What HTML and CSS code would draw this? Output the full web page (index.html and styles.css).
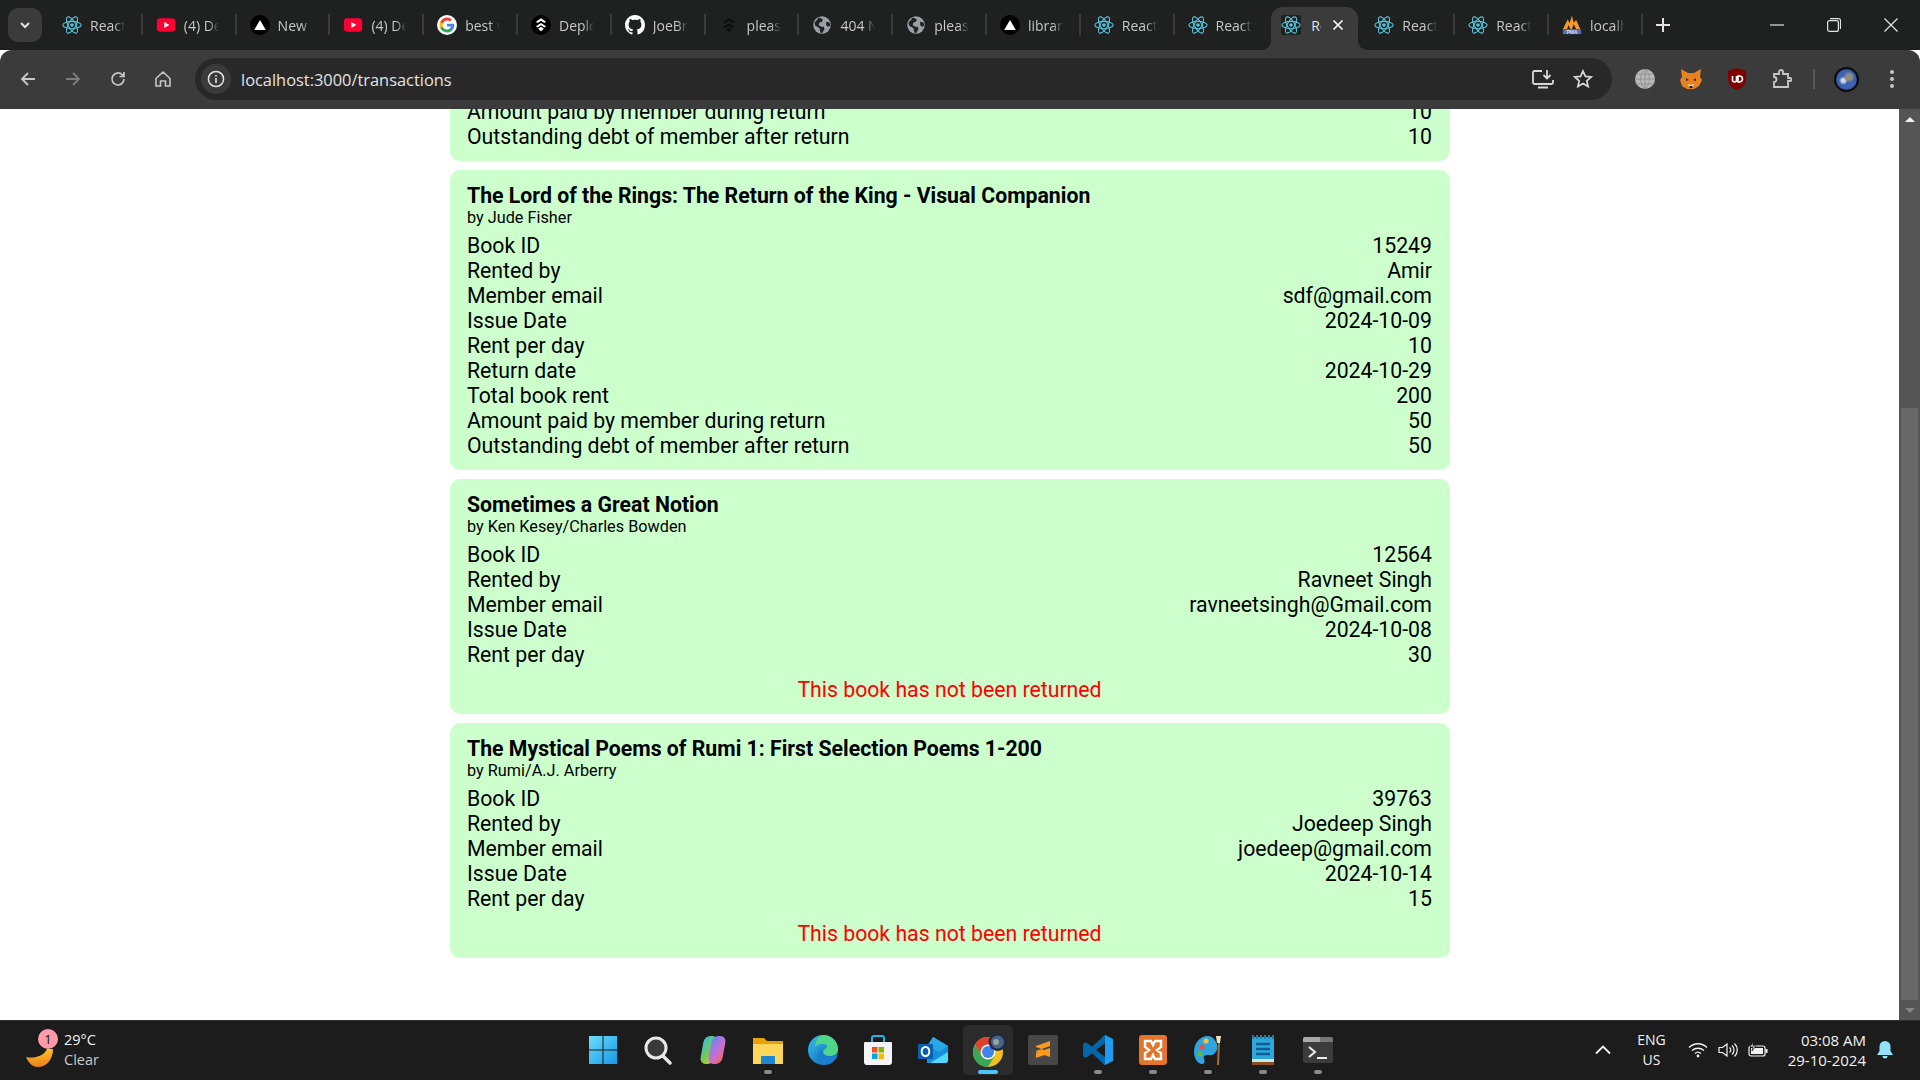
FILE: index.html
```html
<!DOCTYPE html>
<html lang="en">
<head>
    <meta charset="UTF-8">
    <title>Transactions</title>
    <link rel="stylesheet" href="styles.css">
</head>
<body>
    <svg class="defs" aria-hidden="true">
        <symbol id="react" viewBox="0 0 24 24">
            <g fill="none" stroke="#58c4dc" stroke-width="1.3">
                <ellipse cx="12" cy="12" rx="11" ry="4.4"/>
                <ellipse cx="12" cy="12" rx="11" ry="4.4" transform="rotate(60 12 12)"/>
                <ellipse cx="12" cy="12" rx="11" ry="4.4" transform="rotate(120 12 12)"/>
            </g>
            <circle cx="12" cy="12" r="2.2" fill="#58c4dc"/>
        </symbol>
        <symbol id="youtube" viewBox="0 0 24 24">
            <rect x="1" y="4" width="22" height="16" rx="4" fill="#ff0033"/>
            <path d="M10 8.5v7l6-3.5z" fill="#fff"/>
        </symbol>
        <symbol id="vercel" viewBox="0 0 24 24">
            <circle cx="12" cy="12" r="12" fill="#000"/>
            <path d="M12 6l7 12H5z" fill="#fff"/>
        </symbol>
        <symbol id="globe" viewBox="0 0 24 24">
            <circle cx="12" cy="12" r="10.5" fill="#9aa0a6"/>
            <path d="M8 3l5 2-1 3-3 1-1 3 3 2 3 0 1 3-3 5-2-1-1-5-5-3-1-4 3-3zM17 8l4 1 1 4-3 1-2-2z" fill="#202124"/>
        </symbol>
        <symbol id="google" viewBox="0 0 24 24">
            <circle cx="12" cy="12" r="12" fill="#fff"/>
            <path d="M20.6 12.2c0-.6-.1-1.200-.2-1.800H12v3.400h4.800c-.2 1.100-.8 2-1.800 2.700v2.200h2.900c1.700-1.600 2.700-3.800 2.700-6.500z" fill="#4285f4"/>
            <path d="M12 21c2.400 0 4.400-.8 5.900-2.200L15 16.500c-.8.500-1.800.9-3 .9-2.300 0-4.300-1.600-5-3.700H4v2.300C5.500 19 8.500 21 12 21z" fill="#34a853"/>
            <path d="M7 13.700c-.4-1.100-.4-2.300 0-3.400V8H4c-1.300 2.500-1.300 5.500 0 8z" fill="#fbbc05"/>
            <path d="M12 6.600c1.300 0 2.500.5 3.400 1.300L18 5.400C16.400 3.900 14.300 3 12 3 8.500 3 5.500 5 4 8l3 2.300c.7-2.100 2.700-3.700 5-3.700z" fill="#ea4335"/>
        </symbol>
        <symbol id="deploy" viewBox="0 0 24 24">
            <circle cx="12" cy="12" r="12" fill="#000"/>
            <path d="M12 4l6 4-2 1.500-4-2.700-4 2.700L6 8zM12 9.500l6 4-2 1.500-4-2.700-4 2.700-2-1.500zM8.500 16.500l3.500-2.300 3.500 2.300L12 19.500z" fill="#fff"/>
        </symbol>
        <symbol id="deploy-dark" viewBox="0 0 24 24">
            <path d="M12 4l7 4.500-2 1.500-5-3-5 3-2-1.500zM12 10l7 4.500-2 1.500-5-3-5 3-2-1.500zM8 17.500l4-2.500 4 2.500-4 3z" fill="#0f0f0f"/>
        </symbol>
        <symbol id="github" viewBox="0 0 16 16">
            <path fill="#fff" d="M8 0C3.580 0 0 3.580 0 8c0 3.540 2.290 6.530 5.470 7.590.4.070.55-.17.55-.38 0-.19-.01-.82-.01-1.490-2.010.37-2.530-.49-2.690-.94-.09-.23-.48-.94-.82-1.130-.28-.15-.68-.52-.01-.53.630-.01 1.080.58 1.230.82.720 1.210 1.870.87 2.330.66.070-.52.280-.87.510-1.070-1.780-.2-3.640-.89-3.640-3.950 0-.87.310-1.590.820-2.150-.08-.2-.36-1.020.08-2.120 0 0 .67-.21 2.200.82.640-.18 1.320-.27 2-.27s1.360.09 2 .27c1.530-1.040 2.200-.82 2.200-.82.440 1.100.160 1.920.080 2.120.51.560.82 1.270.82 2.150 0 3.070-1.870 3.750-3.650 3.950.29.250.54.730.54 1.480 0 1.070-.01 1.930-.01 2.200 0 .21.150.46.550.38A8.010 8.010 0 0 0 16 8c0-4.420-3.580-8-8-8z"/>
        </symbol>
        <symbol id="pma" viewBox="0 0 24 24">
            <path d="M1 17L7 5l2 5 3-9 2 8 3-3 5 11z" fill="#f39a2b"/>
            <path d="M6 17l2-5 2 5zM12 17l2-6 3 6z" fill="#1e2023"/>
            <rect x="1" y="17" width="22" height="6" fill="#5a6aa6"/>
            <text x="12" y="22.500" class="pma-text">PMA</text>
        </symbol>
    </svg>

    <header class="tab-strip">
        <button class="tab-search" type="button">
            <svg viewBox="0 0 12 12" width="12" height="12"><path d="M2 4l4 4 4-4" fill="none" stroke="#e3e3e3" stroke-width="2"/></svg>
        </button>
        <div class="tabs">
            <div class="tab"><svg class="favicon"><use href="#react"/></svg><span class="tab-title">React App</span></div>
            <div class="tab"><svg class="favicon"><use href="#youtube"/></svg><span class="tab-title">(4) Deploy</span></div>
            <div class="tab"><svg class="favicon"><use href="#vercel"/></svg><span class="tab-title">New Project</span></div>
            <div class="tab"><svg class="favicon"><use href="#youtube"/></svg><span class="tab-title">(4) Deploy</span></div>
            <div class="tab"><svg class="favicon"><use href="#google"/></svg><span class="tab-title">best way</span></div>
            <div class="tab"><svg class="favicon"><use href="#deploy"/></svg><span class="tab-title">Deploy</span></div>
            <div class="tab"><svg class="favicon"><use href="#github"/></svg><span class="tab-title">JoeBrar</span></div>
            <div class="tab"><svg class="favicon"><use href="#deploy-dark"/></svg><span class="tab-title">please</span></div>
            <div class="tab"><svg class="favicon"><use href="#globe"/></svg><span class="tab-title">404 Not</span></div>
            <div class="tab"><svg class="favicon"><use href="#globe"/></svg><span class="tab-title">please</span></div>
            <div class="tab"><svg class="favicon"><use href="#vercel"/></svg><span class="tab-title">library</span></div>
            <div class="tab"><svg class="favicon"><use href="#react"/></svg><span class="tab-title">React App</span></div>
            <div class="tab tab-last-before"><svg class="favicon"><use href="#react"/></svg><span class="tab-title">React App</span></div>
            <div class="tab tab-active">
                <span class="favicon-box"><svg class="favicon"><use href="#react"/></svg></span>
                <span class="tab-title tab-title-short">React</span>
                <svg class="tab-close" viewBox="0 0 12 12" width="12" height="12"><path d="M1.500 1.500l9 9M10.500 1.500l-9 9" stroke="#fff" stroke-width="1.600"/></svg>
            </div>
            <div class="tab"><svg class="favicon"><use href="#react"/></svg><span class="tab-title">React App</span></div>
            <div class="tab"><svg class="favicon"><use href="#react"/></svg><span class="tab-title">React App</span></div>
            <div class="tab"><svg class="favicon"><use href="#pma"/></svg><span class="tab-title">localhost</span></div>
        </div>
        <svg class="new-tab" viewBox="0 0 14 14" width="14" height="14"><path d="M7 0v14M0 7h14" stroke="#e3e3e3" stroke-width="2"/></svg>
        <div class="window-controls">
            <svg viewBox="0 0 14 14" width="14" height="14"><path d="M0 7h14" stroke="#e3e3e3" stroke-width="1.200"/></svg>
            <svg viewBox="0 0 14 14" width="14" height="14"><rect x=".6" y="2.600" width="10.800" height="10.800" rx="2" fill="none" stroke="#e3e3e3" stroke-width="1.200"/><path d="M3 .6h8.500a2 2 0 0 1 2 2V11" fill="none" stroke="#e3e3e3" stroke-width="1.200"/></svg>
            <svg viewBox="0 0 14 14" width="14" height="14"><path d="M.5.500l13 13M13.500.5l-13 13" stroke="#e3e3e3" stroke-width="1.200"/></svg>
        </div>
    </header>

    <nav class="toolbar">
        <div class="nav-buttons">
            <svg viewBox="0 0 18 18" width="18" height="18"><path d="M16 9H3M9 3L3 9l6 6" fill="none" stroke="#c7c7c7" stroke-width="1.800"/></svg>
            <svg viewBox="0 0 18 18" width="18" height="18"><path d="M2 9h13M9 3l6 6-6 6" fill="none" stroke="#7d7d7d" stroke-width="1.800"/></svg>
            <svg viewBox="0 0 18 18" width="18" height="18"><path d="M15 9a6 6 0 1 1-1.800-4.300L15 6.500M15 2v4.500h-4.500" fill="none" stroke="#c7c7c7" stroke-width="1.700"/></svg>
            <svg viewBox="0 0 18 18" width="18" height="18"><path d="M2 8.500L9 2l7 6.500V16h-4.500v-5h-5v5H2z" fill="none" stroke="#c7c7c7" stroke-width="1.600"/></svg>
        </div>
        <div class="omnibox">
            <span class="site-info">
                <svg viewBox="0 0 18 18" width="18" height="18"><circle cx="9" cy="9" r="7.600" fill="none" stroke="#e3e3e3" stroke-width="1.500"/><path d="M9 8v5M9 5v1.600" stroke="#e3e3e3" stroke-width="1.600"/></svg>
            </span>
            <span class="url">localhost:3000/transactions</span>
            <svg class="omni-icon" viewBox="0 0 22 20" width="22" height="20"><path d="M10 2H2.500A1.500 1.500 0 0 0 1 3.500v10A1.500 1.500 0 0 0 2.500 15h17a1.500 1.500 0 0 0 1.500-1.500V11M6 18.500h10" fill="none" stroke="#d8d8d8" stroke-width="1.800"/><path d="M15 1v8M11.500 6l3.500 3.500L18.500 6" fill="none" stroke="#d8d8d8" stroke-width="1.800"/></svg>
            <svg class="omni-icon" viewBox="0 0 20 20" width="20" height="20"><path d="M10 2l2.400 5.400 5.800.6-4.400 3.900 1.300 5.700-5.100-3-5.100 3 1.300-5.700L1.800 8l5.800-.6z" fill="none" stroke="#d8d8d8" stroke-width="1.700"/></svg>
        </div>
        <div class="extensions">
            <svg viewBox="0 0 20 20" width="20" height="20"><circle cx="10" cy="10" r="10" fill="#b9b9b9"/><path d="M0 10h20M1.500 5h17M1.500 15h17M10 0v20M10 0c-6 5-6 15 0 20M10 0c6 5 6 15 0 20" fill="none" stroke="#8a8a8a" stroke-width=".8"/></svg>
            <svg viewBox="0 0 22 20" width="22" height="20"><path d="M1 0l7 4h6l7-4-1 8 2 3-3 6-5 3H7l-5-3-2-6 2-3z" fill="#e8821e"/><path d="M6 9l3 2-3 1zM16 9l-3 2 3 1z" fill="#3b2a1a"/><path d="M8 15l3 1 3-1-1 3H9z" fill="#f3ddc6"/><path d="M9.500 17h3v2h-3z" fill="#222"/></svg>
            <svg viewBox="0 0 20 22" width="20" height="22"><path d="M10 0l9 3v8c0 5-4 9-9 11-5-2-9-6-9-11V3z" fill="#800000"/><path d="M5.500 8v4a2 2 0 0 0 4 0V8M11 8v6h1.500a3 3 0 0 0 0-6z" fill="none" stroke="#fff" stroke-width="1.600"/></svg>
            <svg viewBox="0 0 20 20" width="20" height="20"><path d="M2 5h5V3a2 2 0 0 1 4 0v2h5v4h2a1.500 1.500 0 0 1 0 3h-2v6H2v-5a2.500 2.500 0 0 0 0-5z" fill="none" stroke="#c7c7c7" stroke-width="1.800"/></svg>
            <span class="toolbar-divider"></span>
            <span class="avatar"></span>
            <svg class="menu-dots" viewBox="0 0 4 18" width="4" height="18"><circle cx="2" cy="2" r="2" fill="#c7c7c7"/><circle cx="2" cy="9" r="2" fill="#c7c7c7"/><circle cx="2" cy="16" r="2" fill="#c7c7c7"/></svg>
        </div>
    </nav>

    <div class="viewport">
        <main class="transactions">
            <section class="card">
                <div class="row"><span>Amount paid by member during return</span><span>10</span></div>
                <div class="row"><span>Outstanding debt of member after return</span><span>10</span></div>
            </section>
            <section class="card">
                <h2 class="book-title">The Lord of the Rings: The Return of the King - Visual Companion</h2>
                <p class="book-author">by Jude Fisher</p>
                <div class="row"><span>Book ID</span><span>15249</span></div>
                <div class="row"><span>Rented by</span><span>Amir</span></div>
                <div class="row"><span>Member email</span><span>sdf@gmail.com</span></div>
                <div class="row"><span>Issue Date</span><span>2024-10-09</span></div>
                <div class="row"><span>Rent per day</span><span>10</span></div>
                <div class="row"><span>Return date</span><span>2024-10-29</span></div>
                <div class="row"><span>Total book rent</span><span>200</span></div>
                <div class="row"><span>Amount paid by member during return</span><span>50</span></div>
                <div class="row"><span>Outstanding debt of member after return</span><span>50</span></div>
            </section>
            <section class="card">
                <h2 class="book-title">Sometimes a Great Notion</h2>
                <p class="book-author">by Ken Kesey/Charles Bowden</p>
                <div class="row"><span>Book ID</span><span>12564</span></div>
                <div class="row"><span>Rented by</span><span>Ravneet Singh</span></div>
                <div class="row"><span>Member email</span><span>ravneetsingh@Gmail.com</span></div>
                <div class="row"><span>Issue Date</span><span>2024-10-08</span></div>
                <div class="row"><span>Rent per day</span><span>30</span></div>
                <p class="not-returned">This book has not been returned</p>
            </section>
            <section class="card">
                <h2 class="book-title">The Mystical Poems of Rumi 1: First Selection Poems 1-200</h2>
                <p class="book-author">by Rumi/A.J. Arberry</p>
                <div class="row"><span>Book ID</span><span>39763</span></div>
                <div class="row"><span>Rented by</span><span>Joedeep Singh</span></div>
                <div class="row"><span>Member email</span><span>joedeep@gmail.com</span></div>
                <div class="row"><span>Issue Date</span><span>2024-10-14</span></div>
                <div class="row"><span>Rent per day</span><span>15</span></div>
                <p class="not-returned">This book has not been returned</p>
            </section>
        </main>
        <div class="scrollbar">
            <div class="scroll-arrow"><span class="arrow-up"></span></div>
            <div class="scroll-track"><div class="scroll-thumb"></div></div>
            <div class="scroll-arrow"><span class="arrow-down"></span></div>
        </div>
    </div>

    <footer class="taskbar">
        <div class="weather">
            <span class="weather-icon">
                <svg viewBox="0 0 28 28" width="28" height="28"><defs><linearGradient id="moon" x1="0" y1="0" x2="0" y2="1"><stop offset="0" stop-color="#fbc02d"/><stop offset="1" stop-color="#ef7f16"/></linearGradient></defs><path d="M0 17c8 2 18-1 21-8h6c0 11-7 18-15 18C6 27 2 22 0 17z" fill="url(#moon)"/></svg>
                <span class="weather-badge">1</span>
            </span>
            <div class="weather-text"><span>29°C</span><span class="weather-sub">Clear</span></div>
        </div>
        <div class="task-icons">
            <span class="task-item">
                <svg viewBox="0 0 30 30" width="30" height="30"><defs><linearGradient id="win" x1="0" y1="0" x2="1" y2="1"><stop offset="0" stop-color="#6fdcfb"/><stop offset="1" stop-color="#1499e8"/></linearGradient></defs><path d="M1 1h13.500v13.500H1zM15.500 1H29v13.500H15.500zM1 15.500h13.500V29H1zM15.500 15.500H29V29H15.500z" fill="url(#win)"/></svg>
            </span>
            <span class="task-item">
                <svg viewBox="0 0 30 30" width="30" height="30"><circle cx="13" cy="13" r="10" fill="#3a3a3a" stroke="#e8e8e8" stroke-width="3"/><path d="M20 21l7 7" stroke="#e8e8e8" stroke-width="3.400" stroke-linecap="round"/></svg>
            </span>
            <span class="task-item">
                <svg viewBox="0 0 30 30" width="30" height="30"><defs><linearGradient id="cop1" x1="0" y1="0" x2="1" y2="1"><stop offset="0" stop-color="#2fc4e8"/><stop offset=".55" stop-color="#7dc84a"/><stop offset="1" stop-color="#f4c430"/></linearGradient><linearGradient id="cop2" x1="0" y1="0" x2="1" y2="1"><stop offset="0" stop-color="#5b8cf0"/><stop offset=".55" stop-color="#c86dd8"/><stop offset="1" stop-color="#f26a4a"/></linearGradient></defs><g transform="translate(15 15) skewX(-10) translate(-15 -15)"><rect x="4" y="1" width="14" height="28" rx="6" fill="url(#cop1)"/><rect x="12" y="1" width="14" height="28" rx="6" fill="url(#cop2)"/></g></svg>
            </span>
            <span class="task-item has-dot">
                <svg viewBox="0 0 30 30" width="30" height="30"><path d="M0 3h11l3 3h16v5H0z" fill="#e8a200"/><path d="M0 9h30v20H0z" fill="#ffd65c"/><path d="M9 21h12a1 1 0 0 1 1 1v7H8v-7a1 1 0 0 1 1-1z" fill="#1c86d1"/></svg>
            </span>
            <span class="task-item">
                <svg viewBox="0 0 30 30" width="30" height="30"><defs><linearGradient id="edge" x1="0" y1="0" x2="1" y2="1"><stop offset="0" stop-color="#35c1f1"/><stop offset="1" stop-color="#0c59a4"/></linearGradient></defs><circle cx="15" cy="15" r="15" fill="url(#edge)"/><path d="M15 0c8 0 15 6 15 14 0 5-4 7-8 7s-7-2-7-4c0-3 4-3 4-6-2-3-8-3-12 1C8 4 11 0 15 0z" fill="#4fd68a"/><path d="M30 20c-2 5-7 10-14 10-4 0-7-3-7-8 0-3 2-6 6-7-1 6 5 9 15 5z" fill="#1b7fd0"/></svg>
            </span>
            <span class="task-item">
                <svg viewBox="0 0 30 30" width="30" height="30"><path d="M9 7V3a2 2 0 0 1 2-2h8a2 2 0 0 1 2 2v4" fill="none" stroke="#21b5ea" stroke-width="2"/><path d="M2 7h26a1 1 0 0 1 1 1v19a3 3 0 0 1-3 3H4a3 3 0 0 1-3-3V8a1 1 0 0 1 1-1z" fill="#f4f4f4"/><path d="M9 12h5.500v5.500H9z" fill="#f25022"/><path d="M15.500 12H21v5.500h-5.500z" fill="#7fba00"/><path d="M9 18.500h5.500V24H9z" fill="#00a4ef"/><path d="M15.500 18.500H21V24h-5.500z" fill="#ffb900"/></svg>
            </span>
            <span class="task-item">
                <svg viewBox="0 0 30 30" width="30" height="30"><path d="M15 2l15 9v14a3 3 0 0 1-3 3H9v-6z" fill="#1490df"/><path d="M15 2l15 9-9 6-12-6z" fill="#28a8ea"/><path d="M12 28l18-11v8a3 3 0 0 1-3 3z" fill="#50d9ff"/><rect x="0" y="9" width="15" height="15" rx="1" fill="#0a5fb0"/><ellipse cx="7.500" cy="16.500" rx="3.800" ry="4.600" fill="none" stroke="#fff" stroke-width="2"/></svg>
            </span>
            <span class="task-item task-active">
                <svg viewBox="0 0 34 34" width="34" height="34"><circle cx="15" cy="19" r="15" fill="#f3c11c"/><path d="M15 4A15 15 0 0 0 2 11.500l6.500 11.500L15 12h13A15 15 0 0 0 15 4z" fill="#e0412f"/><path d="M2 11.500A15 15 0 0 0 15 34l6.500-11H8.500z" fill="#3aa757"/><circle cx="15" cy="19" r="7.500" fill="#fff"/><circle cx="15" cy="19" r="6" fill="#3f84ee"/><circle cx="24.500" cy="9" r="9" fill="#1f2a44"/><circle cx="24.500" cy="9" r="6.500" fill="#4a6488"/><circle cx="23" cy="9" r="3" fill="#9aa39a"/></svg>
            </span>
            <span class="task-item">
                <svg viewBox="0 0 30 30" width="30" height="30"><rect width="30" height="30" rx="2" fill="#474747"/><path d="M22 6L8 11v5l14-5zM8 12l14 5v5L8 17zM22 18L8 23v-5l14-5z" fill="#f79a1f"/></svg>
            </span>
            <span class="task-item has-dot">
                <svg viewBox="0 0 30 30" width="30" height="30"><path d="M22 0l8 4v22l-8 4-13-12-6 4.500L0 21v-12l3-1.500L9 12z" fill="#1f9cf0"/><path d="M22 0L9 12 3 7.500 0 9v12l3 1.500L9 18l13 12z" fill="#0065a9"/><path d="M22 8v14l-9-7z" fill="#1c1c1c"/></svg>
            </span>
            <span class="task-item has-dot">
                <svg viewBox="0 0 30 30" width="30" height="30"><rect x="1" width="28" height="30" rx="3" fill="#e2752a"/><path d="M7 6h6l2 4 2-4h6v6l-4 3 4 3v6h-6l-2-4-2 4H7v-6l4-3-4-3z" fill="none" stroke="#fff" stroke-width="2.400"/></svg>
            </span>
            <span class="task-item has-dot">
                <svg viewBox="0 0 30 30" width="30" height="30"><path d="M15 1C7 1 1 8 1 17c0 7 4 12 8 12 3 0 3-3 2-5-1-3 1-4 3-4 3 0 6 1 8-2 3-3 3-7 1-11-2-4-5-6-8-6z" fill="#2ea5df"/><circle cx="9" cy="12" r="2.500" fill="#f04f3c"/><circle cx="13" cy="6" r="2.500" fill="#f7c331"/><circle cx="7" cy="19" r="2.500" fill="#69b93a"/><path d="M25 6l2 0-1 24h-2z" fill="#a5713b"/><path d="M23 1h5l-1 7h-3z" fill="#f4e3c1"/></svg>
            </span>
            <span class="task-item has-dot">
                <svg viewBox="0 0 30 30" width="30" height="30"><rect x="4" y="2" width="22" height="24" fill="#2fa7dc"/><path d="M8 9h14M8 14h14M8 19h14" stroke="#0c5f8e" stroke-width="2.400"/><path d="M5 0v4M9 0v4M13 0v4M17 0v4M21 0v4M25 0v4" stroke="#1b7faa" stroke-width="2"/><rect x="4" y="24" width="22" height="3" fill="#c5e6f2"/><rect x="4" y="27" width="22" height="3" fill="#8a4e1f"/></svg>
            </span>
            <span class="task-item has-dot">
                <svg viewBox="0 0 30 30" width="30" height="30"><rect y="2" width="30" height="26" rx="2" fill="#3c3c3c"/><path d="M0 4a2 2 0 0 1 2-2h15v5H0z" fill="#a9a9a9"/><path d="M17 2h11a2 2 0 0 1 2 2v3H17z" fill="#777"/><path d="M6 12l6 5-6 5" fill="none" stroke="#eee" stroke-width="2"/><path d="M14 23h10" stroke="#eee" stroke-width="2"/></svg>
            </span>
        </div>
        <div class="tray">
            <svg class="tray-chevron" viewBox="0 0 16 10" width="16" height="10"><path d="M1 8.500l7-7 7 7" fill="none" stroke="#f2f2f2" stroke-width="1.800"/></svg>
            <div class="tray-lang"><span>ENG</span><span>US</span></div>
            <div class="tray-status">
                <svg viewBox="0 0 20 16" width="20" height="16"><path d="M1 5.500c5-5 13-5 18 0M4 8.500c3.300-3 8.700-3 12 0M7 11.500c1.700-1.500 4.300-1.500 6 0" fill="none" stroke="#f2f2f2" stroke-width="1.300"/><circle cx="10" cy="14" r="1.400" fill="#f2f2f2"/></svg>
                <svg viewBox="0 0 20 16" width="20" height="16"><path d="M1 5.500h3.500L9 2v12l-4.500-3.500H1z" fill="none" stroke="#f2f2f2" stroke-width="1.200"/><path d="M11.500 5.500a3 3 0 0 1 0 5M14 3.500a6 6 0 0 1 0 9M16.500 1.500a9 9 0 0 1 0 13" fill="none" stroke="#f2f2f2" stroke-width="1.200"/></svg>
                <svg viewBox="0 0 20 16" width="20" height="16"><rect x="1" y="4" width="16" height="10" rx="2" fill="none" stroke="#f2f2f2" stroke-width="1.200"/><rect x="3" y="6" width="12" height="6" fill="#f2f2f2"/><rect x="17.500" y="7" width="2" height="4" fill="#f2f2f2"/><path d="M5 0L2 5h3l-1 4 4-5H5z" fill="#f2f2f2" stroke="#1c1c1c" stroke-width=".8"/></svg>
            </div>
            <div class="tray-clock"><span>03:08 AM</span><span>29-10-2024</span></div>
            <svg class="tray-bell" viewBox="0 0 16 18" width="16" height="18"><path d="M8 0a5.500 5.500 0 0 1 5.500 5.500V10l2.500 4H0l2.500-4V5.500A5.500 5.500 0 0 1 8 0z" fill="#8fe3fb"/><path d="M5.500 15h5a2.500 2.500 0 0 1-5 0z" fill="#8fe3fb"/></svg>
        </div>
    </footer>
</body>
</html>
```

FILE: styles.css
```css
html, body {
    margin: 0;
    height: 100%;
}
body {
    display: flex;
    flex-direction: column;
    height: 100vh;
    overflow: hidden;
    font-family: Roboto, sans-serif;
    background: #fff;
}
.defs {
    display: block;
    width: 0;
    height: 0;
}
.pma-text {
    font-family: "Liberation Sans", sans-serif;
    font-size: 6px;
    font-weight: 700;
    fill: #d8dcf0;
    text-anchor: middle;
}

/* tabs */
.tab-strip {
    flex: none;
    height: 50px;
    display: flex;
    align-items: flex-end;
    background: #1f2020;
    font-family: "Open Sans", sans-serif;
}
.tab-search {
    flex: none;
    width: 34px;
    height: 34px;
    margin: 0 7px 8px 8px;
    padding: 0;
    border: none;
    border-radius: 10px;
    background: #3b3b3b;
    display: flex;
    align-items: center;
    justify-content: center;
}
.tabs {
    display: flex;
    align-items: flex-end;
}
.tab {
    flex: none;
    box-sizing: border-box;
    width: 93.8px;
    height: 43px;
    padding: 0 16px 7px 13px;
    display: flex;
    align-items: center;
    gap: 8px;
    border-right: 2px solid #3a3b3b;
    border-image: linear-gradient(to bottom, transparent 8px, #3a3b3b 8px, #3a3b3b 28px, transparent 28px) 1;
    overflow: hidden;
}
.favicon {
    flex: none;
    width: 20px;
    height: 20px;
}
.tab-title {
    flex: 1;
    min-width: 0;
    overflow: hidden;
    white-space: nowrap;
    font-size: 14px;
    color: #c7c7c7;
    -webkit-mask-image: linear-gradient(to right, #000 70%, transparent);
    mask-image: linear-gradient(to right, #000 70%, transparent);
}
.tab-last-before {
    border-right: none;
}
.tab-active {
    position: relative;
    width: 87px;
    margin: 0 3px 0 3px;
    padding: 0 14px 7px 10px;
    gap: 5px;
    border: none;
    border-radius: 12px 12px 0 0;
    background: #3b3b3b;
    overflow: visible;
}
.tab-active::before, .tab-active::after {
    content: "";
    position: absolute;
    bottom: 0;
    width: 10px;
    height: 10px;
}
.tab-active::before {
    left: -10px;
    background: radial-gradient(circle at 0 0, transparent 10px, #3b3b3b 10.5px);
}
.tab-active::after {
    right: -10px;
    background: radial-gradient(circle at 100% 0, transparent 10px, #3b3b3b 10.5px);
}
.favicon-box {
    flex: none;
    display: flex;
    background: #202020;
    border-radius: 2px;
}
.tab-title-short {
    flex: 0 0 10px;
    margin-left: 5px;
    color: #e3e3e3;
    -webkit-mask-image: none;
    mask-image: none;
}
.tab-close {
    flex: none;
    margin-left: auto;
}
.new-tab {
    flex: none;
    margin: 0 0 18px 13px;
}
.window-controls {
    margin-left: auto;
    align-self: center;
    display: flex;
    align-items: center;
    gap: 43px;
    padding-right: 22px;
}

/* toolbar */
.toolbar {
    flex: none;
    height: 59px;
    box-sizing: border-box;
    padding-bottom: 1px;
    display: flex;
    align-items: center;
    background: #3b3b3b;
    border-radius: 12px 12px 0 0;
}
.nav-buttons {
    flex: none;
    width: 195px;
    box-sizing: border-box;
    padding-left: 19px;
    display: flex;
    align-items: center;
    gap: 27px;
}
.omnibox {
    flex: none;
    box-sizing: border-box;
    width: 1417px;
    height: 42px;
    padding: 0 19px 0 6px;
    display: flex;
    align-items: center;
    background: #282828;
    border-radius: 21px;
}
.site-info {
    flex: none;
    width: 30px;
    height: 30px;
    border-radius: 50%;
    background: #3b3b3b;
    display: flex;
    align-items: center;
    justify-content: center;
}
.url {
    margin-left: 10px;
    flex: 1;
    font-family: "Open Sans", sans-serif;
    font-size: 16.4px;
    color: #e3e3e3;
}
.omni-icon {
    flex: none;
    margin-left: 19px;
}
.extensions {
    flex: 1;
    padding-left: 23px;
    display: flex;
    align-items: center;
    gap: 25px;
}
.toolbar-divider {
    flex: none;
    width: 2px;
    height: 20px;
    margin: 0 -6px 0 -4px;
    background: #5a5a5a;
}
.avatar {
    flex: none;
    box-sizing: border-box;
    width: 25px;
    height: 25px;
    border-radius: 50%;
    border: 2px solid #0a0a0a;
    background:
        radial-gradient(circle at 62% 38%, #8c8e78 0 16%, transparent 30%),
        radial-gradient(circle at 35% 55%, #cfd6e6 0 10%, transparent 24%),
        radial-gradient(circle at 50% 50%, #3f63b5 0 55%, #1c2c6b);
}
.menu-dots {
    flex: none;
    margin-left: 6px;
}

/* page */
.viewport {
    flex: 1;
    min-height: 0;
    display: flex;
}
.transactions {
    flex: 1;
    min-width: 0;
    box-sizing: border-box;
    padding: 0 0 62px 1px;
    display: flex;
    flex-direction: column;
    justify-content: flex-end;
    align-items: center;
    gap: 9px;
    overflow: hidden;
}
.card {
    flex: none;
    box-sizing: border-box;
    width: 1000px;
    padding: 14px 18px 12px 17px;
    background: #ccffcc;
    border-radius: 10px;
    color: #000;
}
.book-title {
    margin: 0;
    font-size: 21.25px;
    line-height: 24px;
    font-weight: 700;
}
.book-author {
    margin: 0 0 6px;
    padding-top: 1px;
    font-size: 16.25px;
    line-height: 18px;
}
.row {
    display: flex;
    justify-content: space-between;
    font-size: 21.25px;
    line-height: 25px;
}
.not-returned {
    margin: 10px 0 0;
    font-size: 21.25px;
    line-height: 25px;
    text-align: center;
    color: #f00;
}
.scrollbar {
    flex: none;
    width: 21px;
    display: flex;
    flex-direction: column;
    background: #555;
}
.scroll-arrow {
    flex: none;
    height: 20px;
    display: flex;
    align-items: center;
    justify-content: center;
}
.arrow-up, .arrow-down {
    width: 0;
    height: 0;
    border-left: 5px solid transparent;
    border-right: 5px solid transparent;
}
.arrow-up {
    border-bottom: 5px solid #f1f1f1;
}
.arrow-down {
    border-top: 5px solid #868686;
}
.scroll-track {
    flex: 1;
    display: flex;
    flex-direction: column;
    justify-content: flex-end;
    padding: 0 2px;
}
.scroll-thumb {
    height: 592px;
    background: #686868;
}

/* taskbar */
.taskbar {
    flex: none;
    height: 60px;
    box-sizing: border-box;
    border-top: 1px solid #2e2e2e;
    padding-bottom: 1px;
    display: grid;
    grid-template-columns: 1fr auto 1fr;
    align-items: center;
    background: #1c1c1c;
    font-family: "Open Sans", sans-serif;
    color: #f2f2f2;
}
.weather {
    padding-left: 26px;
    display: flex;
    align-items: center;
    gap: 10px;
}
.weather-icon {
    position: relative;
    display: flex;
    padding-top: 8px;
}
.weather-badge {
    position: absolute;
    top: -3px;
    right: -4px;
    width: 20px;
    height: 20px;
    border-radius: 50%;
    background: #ff9aa8;
    color: #111;
    font-size: 13px;
    line-height: 20px;
    text-align: center;
}
.weather-text {
    display: flex;
    flex-direction: column;
    font-size: 14.5px;
    line-height: 20px;
}
.weather-sub {
    color: #c9c9c9;
}
.task-icons {
    display: flex;
    align-items: center;
    padding-left: 1px;
}
.task-item {
    position: relative;
    flex: none;
    width: 55px;
    height: 50px;
    display: flex;
    align-items: center;
    justify-content: center;
}
.has-dot::after, .task-active::after {
    content: "";
    position: absolute;
    left: 50%;
    bottom: 1px;
    width: 8px;
    height: 4px;
    margin-left: -4px;
    border-radius: 2px;
    background: #8a8a8a;
}
.task-active::before {
    content: "";
    position: absolute;
    inset: 0 2.5px;
    background: #2b2b2b;
    border-radius: 5px;
}
.task-active svg {
    position: relative;
    left: 2px;
}
.task-active::after {
    width: 20px;
    margin-left: -10px;
    background: #4cc2ff;
}
.tray {
    display: flex;
    align-items: center;
    justify-content: flex-end;
}
.tray-chevron {
    flex: none;
}
.tray-lang {
    margin-left: 26px;
    display: flex;
    flex-direction: column;
    align-items: center;
    font-size: 14px;
    line-height: 20px;
}
.tray-status {
    margin-left: 22px;
    display: flex;
    align-items: center;
    gap: 10px;
}
.tray-clock {
    margin-left: 20px;
    display: flex;
    flex-direction: column;
    align-items: flex-end;
    font-size: 15px;
    line-height: 20px;
}
.tray-bell {
    flex: none;
    margin: 0 27px 0 11px;
}
```
